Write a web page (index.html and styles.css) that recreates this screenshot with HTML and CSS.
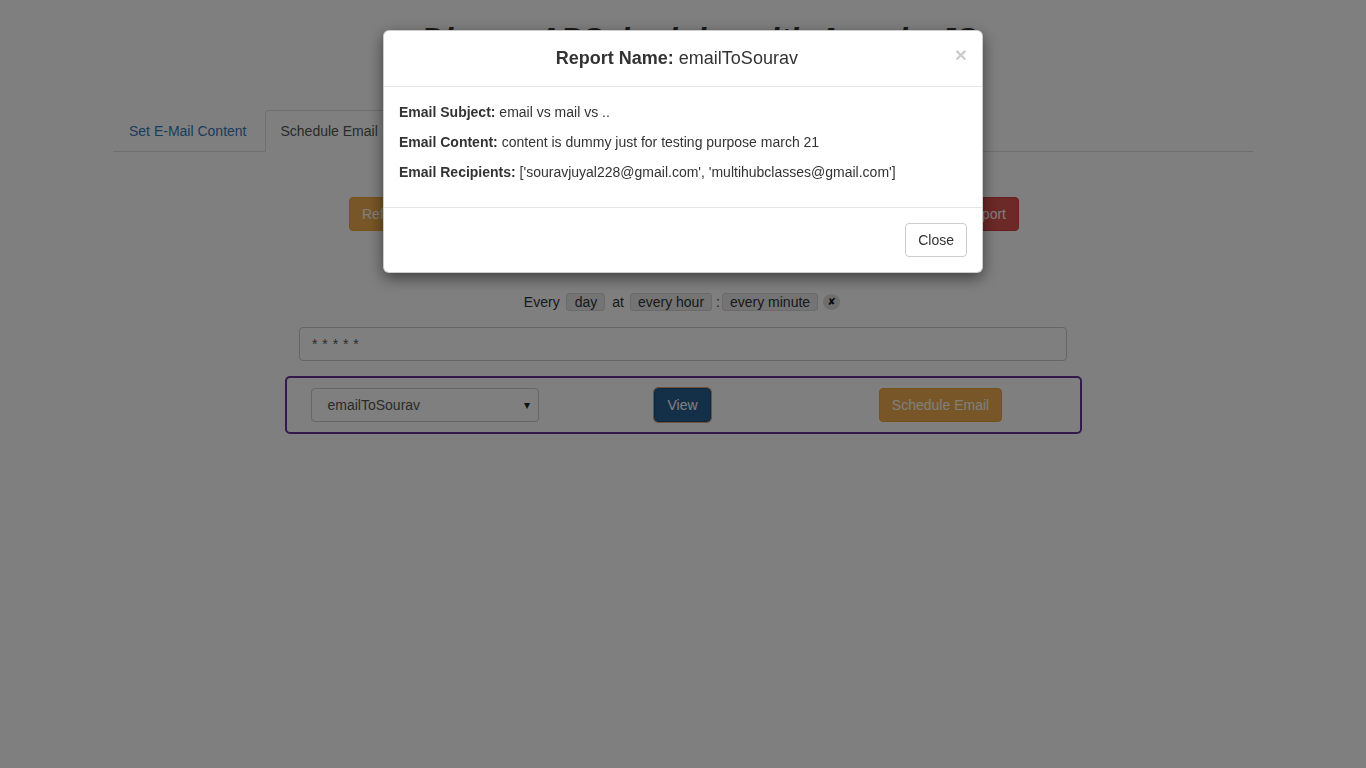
FILE: index.html
```html
<!DOCTYPE html>
<html lang="en">
<head>
<meta charset="utf-8">
<title>Django APScheduler with AngularJS</title>
<link rel="stylesheet" href="styles.css">
</head>
<body>
<div class="container">
  <h1 class="title">Django APScheduler with AngularJS</h1>
  <ul class="tabs">
    <li class="tab"><a class="tab-link">Set E-Mail Content</a></li>
    <li class="tab active"><a class="tab-link">Schedule Email</a></li>
  </ul>
  <div class="pane">
    <div class="actions">
      <button class="btn btn-warning">Refresh Reports</button>
      <button class="btn btn-danger">Delete Report</button>
    </div>
    <div class="cron">
      <span class="cron-word w-every">Every</span>
      <span class="cron-label l-day">day</span>
      <span class="cron-word w-at">at</span>
      <span class="cron-label l-hour">every hour</span>
      <span class="cron-word w-colon">:</span>
      <span class="cron-label l-minute">every minute</span>
      <span class="cron-clear">&#x2718;</span>
    </div>
    <div class="cron-input">* * * * *</div>
    <div class="report-box">
      <div class="cell">
        <div class="select"><span>emailToSourav</span><span class="caret">&#x25BE;</span></div>
      </div>
      <div class="cell">
        <button class="btn btn-primary focused">View</button>
      </div>
      <div class="cell">
        <button class="btn btn-warning">Schedule Email</button>
      </div>
    </div>
  </div>
</div>

<div class="backdrop"></div>
<div class="modal">
  <div class="modal-dialog">
    <div class="modal-content">
      <div class="modal-header">
        <button class="close">&times;</button>
        <h4 class="modal-title"><b>Report Name:</b> emailToSourav</h4>
      </div>
      <div class="modal-body">
        <p class="line"><b>Email Subject:</b> email vs mail vs ..</p>
        <p class="line"><b>Email Content:</b> content is dummy just for testing purpose march 21</p>
        <p class="line"><b>Email Recipients:</b> ['souravjuyal228@gmail.com', 'multihubclasses@gmail.com']</p>
      </div>
      <div class="modal-footer">
        <button class="btn btn-default">Close</button>
      </div>
    </div>
  </div>
</div>
</body>
</html>
```

FILE: styles.css
```css
* { box-sizing: border-box; }
html, body { margin: 0; padding: 0; }
body {
  font-family: "Liberation Sans", Arial, sans-serif;
  font-size: 14px;
  line-height: 20px;
  color: #333;
  background: #fff;
  height: 768px;
  overflow: hidden;
}
.container {
  width: 1140px;
  margin: 0 auto;
}
.title {
  margin: 22px 0 0;
  padding-left: 32px;
  font-size: 32px;
  line-height: 1.1;
  font-weight: bold;
  font-style: italic;
  text-align: center;
  height: 35px;
}
.tabs {
  list-style: none;
  margin: 53px 0 0;
  padding: 0;
  display: flex;
  border-bottom: 1px solid #ddd;
}
.tab { margin-bottom: -1px; margin-right: 2px; }
.tab-link {
  display: block;
  padding: 10px 15px;
  line-height: 20px;
  border: 1px solid transparent;
  border-radius: 4px 4px 0 0;
  color: #337ab7;
}
.tab.active .tab-link {
  color: #555;
  background: #fff;
  border-color: #ddd #ddd transparent;
}
.pane { padding-top: 45px; }
.actions {
  width: 670px;
  margin: 0 auto;
  position: relative;
  left: 1px;
  display: flex;
  justify-content: space-between;
}
.btn {
  font-family: inherit;
  font-size: 14px;
  line-height: 20px;
  padding: 6px 12px;
  border: 1px solid transparent;
  border-radius: 4px;
  color: #fff;
  cursor: pointer;
}
.btn-warning { background: #f0ad4e; border-color: #eea236; }
.btn-danger { background: #d9534f; border-color: #d43f3a; }
.btn-primary { background: #286090; border-color: #204d74; }
.btn-default { background: #fff; border-color: #ccc; color: #333; }
.focused { outline: 1px solid #e0a070; }

.cron {
  margin-top: 61px;
  display: flex;
  justify-content: center;
  align-items: center;
  height: 20px;
  padding-right: 2px;
}
.cron-word { line-height: 20px; }
.w-every { margin-right: 6px; }
.w-at { margin-right: 6px; }
.w-colon { margin-right: 2px; }
.cron-label {
  line-height: 16px;
  padding: 0 7px;
  border: 1px solid #d6d6d6;
  border-radius: 3px;
  background: #e8e8e8;
}
.l-day { margin-right: 7px; padding: 0 7px 0 8px; }
.l-hour { margin-right: 4px; }
.l-minute { margin-right: 5px; }
.cron-clear {
  width: 17px;
  height: 16px;
  border-radius: 50%;
  background: #dcdcdc;
  color: #111;
  font-size: 10px;
  font-weight: bold;
  line-height: 16px;
  text-align: center;
  font-family: "DejaVu Sans", sans-serif;
}
.cron-input {
  width: 768px;
  height: 34px;
  margin: 15px auto 0;
  border: 1px solid #ccc;
  border-radius: 4px;
  padding: 6px 12px;
  line-height: 20px;
  color: #555;
  letter-spacing: 0.5px;
}
.report-box {
  width: 797px;
  margin: 15px auto 0;
  border: 2px solid #663399;
  border-radius: 5px;
  padding: 10px 10px 10px 9px;
  display: grid;
  grid-template-columns: 258px 258px 258px;
  align-items: center;
}
.cell { display: flex; justify-content: center; }
.select {
  width: 228px;
  height: 34px;
  border: 1px solid #ccc;
  border-radius: 4px;
  padding: 6px 8px 6px 16px;
  display: flex;
  justify-content: space-between;
  align-items: center;
  color: #555;
  background: #fff;
}
.caret { font-size: 12px; color: #222; }

.backdrop {
  position: fixed;
  inset: 0;
  background: #000;
  opacity: 0.5;
}
.modal {
  position: fixed;
  inset: 0;
}
.modal-dialog {
  width: 600px;
  margin: 30px auto;
}
.modal-content {
  background: #fff;
  border: 1px solid rgba(0,0,0,.2);
  border-radius: 6px;
  box-shadow: 0 5px 15px rgba(0,0,0,.5);
}
.modal-header {
  padding: 15px;
  border-bottom: 1px solid #e5e5e5;
}
.modal-title {
  margin: 0;
  font-size: 18px;
  font-weight: normal;
  line-height: 25px;
  text-align: center;
}
.close {
  float: right;
  margin-top: -2px;
  padding: 0;
  background: transparent;
  border: 0;
  font-family: "Liberation Sans", Arial, sans-serif;
  font-size: 21px;
  font-weight: bold;
  line-height: 1;
  color: #000;
  opacity: .2;
}
.modal-body { padding: 15px; }
.line { margin: 0 0 10px; }
.modal-footer {
  padding: 15px;
  border-top: 1px solid #e5e5e5;
  display: flex;
  justify-content: flex-end;
}
```
